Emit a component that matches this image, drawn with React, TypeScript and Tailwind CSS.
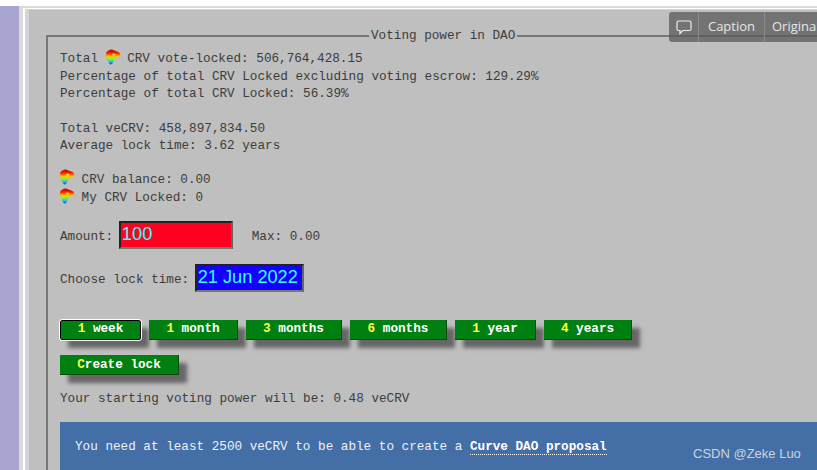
const mono = "font-['Liberation_Mono',monospace]";

function CrvLogo() {
  return (
    <svg width="16" height="16" viewBox="0 0 16 16" className="shrink-0 -mt-[4px] -ml-[1px] -mr-[1px]">
      <defs>
        <linearGradient id="crv" x1="0" y1="0" x2="0" y2="1">
          <stop offset="0" stopColor="#b80000" />
          <stop offset="0.25" stopColor="#ff2000" />
          <stop offset="0.45" stopColor="#ffc000" />
          <stop offset="0.62" stopColor="#a0f020" />
          <stop offset="0.8" stopColor="#20d0d0" />
          <stop offset="1" stopColor="#2040e0" />
        </linearGradient>
      </defs>
      <path d="M1.5 3 Q4 0 7 0.5 L13.5 3 Q16.5 5 14.5 7.5 L9 10.5 L7.5 14.5 Q5 16.5 4 14 L1.5 9 Q0.5 5 1.5 3 Z" fill="url(#crv)" />
      <path d="M7 4.5 L11 5 L8 7.5 Z" fill="#ffe040" />
    </svg>
  );
}

function LockButton({ n, label, w, active }: { n: string; label: string; w: string; active?: boolean }) {
  return (
    <button
      className={`${w} h-5 bg-[#008010] text-[12.67px] leading-none font-bold text-white shadow-[8px_8px_4px_#666] ${mono} ${
        active ? "border border-black rounded-[2px] outline outline-1 outline-white" : "border-r border-b border-[#0a4a10]"
      }`}
    >
      <span className="text-[#ffff40]">{n}</span> {label}
    </button>
  );
}

export default function App() {
  return (
    <div className="w-[817px] h-[470px] overflow-hidden bg-white pt-[6px]">
      <div className="relative flex h-[464px] bg-[#a7a4cf]">
        <div className="w-[19px] shrink-0" />
        <div className="flex-1 bg-[#dadada] pl-[4px] pt-[2px]">
          <div className="h-full bg-white pl-[2px] pt-[1px]">
            <div className={`h-full bg-[#bfbfbf] border-l-[4px] border-t border-l-[#d4d4d4] border-t-[#d4d4d4] pl-[17px] pt-[17px] text-[12.67px] text-[#3c3c3c] ${mono}`}>
              <fieldset className="border-l-2 border-t-2 border-[#777] pl-[12px] pt-[6px] h-[500px] -mr-[40px]">
                <legend className="ml-[309px] px-[2px] text-[12.67px] leading-[17px]">Voting power in DAO</legend>
                <div className="leading-[17.5px]">
                  <div className="flex items-center whitespace-pre">Total <CrvLogo /> CRV vote-locked: 506,764,428.15</div>
                  <div>Percentage of total CRV Locked excluding voting escrow: 129.29%</div>
                  <div>Percentage of total CRV Locked: 56.39%</div>
                  <div className="mt-[17px]">Total veCRV: 458,897,834.50</div>
                  <div>Average lock time: 3.62 years</div>
                  <div className="mt-[16px] flex items-center whitespace-pre"><CrvLogo /> CRV balance: 0.00</div>
                  <div className="mt-[1px] flex items-center whitespace-pre"><CrvLogo /> My CRV Locked: 0</div>
                </div>
                <div className="mt-[14px] flex items-center h-7 whitespace-pre">
                  <span className="mt-[3px]">Amount: </span>
                  <div className="-ml-[2px] w-[114px] h-7 bg-[#ff0020] border-2 border-t-[#222] border-l-[#222] border-r-[#666] border-b-[#777] text-[#33ffff] text-[18.4px] leading-[22px] pl-[1px] font-['Liberation_Sans',sans-serif]">100</div>
                  <span className="ml-[19px] mt-[3px]">Max: 0.00</span>
                </div>
                <div className="mt-[15px] flex items-center h-7 whitespace-pre">
                  <span className="mt-[3px]">Choose lock time: </span>
                  <div className="-ml-[2px] w-[109px] h-7 bg-[#1400ff] border-2 border-t-[#222] border-l-[#222] border-r-[#666] border-b-[#777] text-[#33ffff] text-[18.2px] leading-[22px] pl-[1px] font-['Liberation_Sans',sans-serif]">21 Jun 2022</div>
                </div>
                <div className="mt-[28px] flex gap-[8px]">
                  <LockButton n="1" label="week" w="w-[81px]" active />
                  <LockButton n="1" label="month" w="w-[89px]" />
                  <LockButton n="3" label="months" w="w-[96px]" />
                  <LockButton n="6" label="months" w="w-[97px]" />
                  <LockButton n="1" label="year" w="w-[81px]" />
                  <LockButton n="4" label="years" w="w-[88px]" />
                </div>
                <div className="mt-[15px]">
                  <button className={`w-[119px] h-5 bg-[#008010] text-[12.67px] leading-none font-bold text-white border-r border-b border-[#0a4a10] shadow-[8px_8px_4px_#666] ${mono}`}>
                    <span className="text-[#ffff40]">C</span>reate lock
                  </button>
                </div>
                <div className="mt-[15px] leading-[17px]">Your starting voting power will be: 0.48 veCRV</div>
                <div className="mt-[15px] h-[48px] bg-[#436ea6] text-[#eef2f8] pl-[15px] pt-[16px] leading-[17px]">
                  You need at least 2500 veCRV to be able to create a <a className="font-bold text-white border-b border-dotted border-white">Curve DAO proposal</a>
                </div>
              </fieldset>
            </div>
          </div>
        </div>
        <div className="absolute right-0 top-[6px] flex h-[30px] bg-[#5a5a5a]/75 rounded-l-[3px] text-[13px] text-[#e6e6e6] font-['Open_Sans',sans-serif]">
          <div className="w-[30px] flex items-center justify-center border-r border-[#8a8a8a]">
            <svg width="16" height="15" viewBox="0 0 16 15" fill="none" stroke="#eee" strokeWidth="1.2">
              <path d="M2.5 1h11a1.5 1.5 0 0 1 1.5 1.5v6.5a1.5 1.5 0 0 1-1.5 1.5H7L4 13.5v-3H2.5A1.5 1.5 0 0 1 1 9V2.5A1.5 1.5 0 0 1 2.5 1z" />
            </svg>
          </div>
          <div className="w-[66px] flex items-center justify-center border-r border-[#8a8a8a]">Caption</div>
          <div className="w-[52px] pl-[7px] flex items-center whitespace-nowrap overflow-hidden">Original</div>
        </div>
        <div className="absolute left-[693px] top-[440px] text-[13px] leading-[16px] text-[#ccd4e0] font-['Liberation_Sans',sans-serif]">CSDN @Zeke Luo</div>
      </div>
    </div>
  );
}
